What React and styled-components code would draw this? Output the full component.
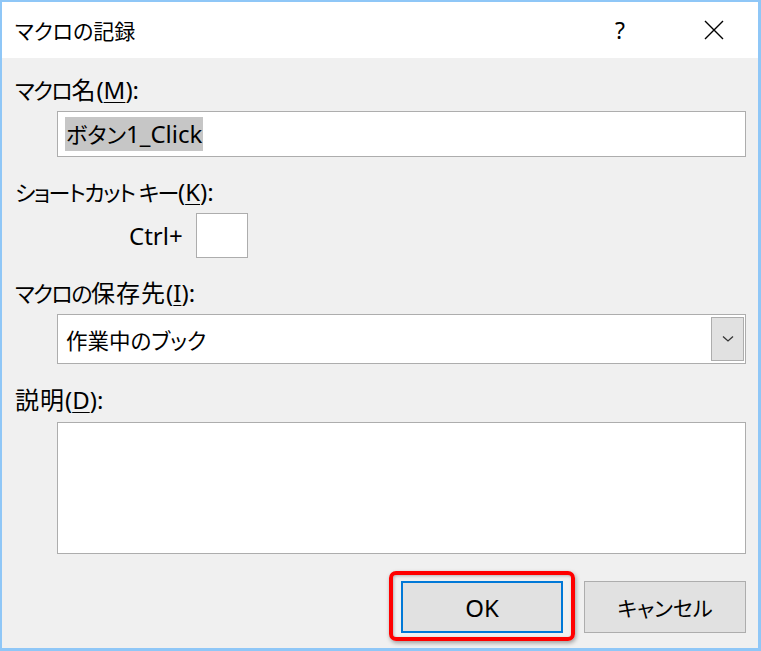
import React from "react";
import styled, { createGlobalStyle } from "styled-components";

const Global = createGlobalStyle`
  html, body { margin: 0; padding: 0; background: #f0f0f0; }
  body {
    font-family: "Noto Sans", "Noto Sans CJK JP", sans-serif;
    color: #000;
  }
`;

const Frame = styled.div`
  width: 761px;
  height: 651px;
  box-sizing: border-box;
  border: 2px solid #8fc7f7;
  border-bottom-width: 3px;
  border-right-width: 3px;
  background: #f0f0f0;
  display: flex;
  flex-direction: column;
`;

const TitleBar = styled.div`
  height: 56px;
  background: #fff;
  display: flex;
  align-items: center;
  padding-left: 13px;
  flex-shrink: 0;
`;

const Title = styled.div`
  flex: 1;
  font-size: 21px;
  font-family: "Noto Sans CJK JP", sans-serif;
  font-feature-settings: "palt";
`;

const Help = styled.div`
  font-size: 23px;
  width: 28px;
  text-align: center;
  margin-right: 70px;
`;

const Close = styled.div`
  width: 20px;
  height: 20px;
  margin-right: 34px;
  display: flex;
`;

const Body = styled.div`
  flex: 1;
  display: flex;
  flex-direction: column;
  padding: 0 12px 0 13px;
`;

const Label = styled.div`
  font-size: 22px;
  letter-spacing: -1.5px;
  font-feature-settings: "palt";
  line-height: 30px;
  height: 30px;
  margin-top: ${(p) => p.$top}px;
  white-space: nowrap;
  u { text-decoration-thickness: 1px; text-underline-offset: 3px; }
`;

const Latin = styled.span`
  font-size: 24px;
  letter-spacing: 0;
`;

const Kanji = styled.span`
  font-size: 24px;
  letter-spacing: 1px;
`;

const Field = styled.div`
  margin-left: 42px;
  margin-top: ${(p) => p.$top}px;
  height: ${(p) => p.$h}px;
  box-sizing: border-box;
  border: 1px solid #adadad;
  background: #fff;
  display: flex;
  align-items: center;
  font-size: 22px;
  font-feature-settings: "palt";
`;

const Selected = styled.span`
  margin-left: 7px;
  background: #c6c6c6;
  padding: 0 1px;
  line-height: 33px;
`;

const SelectText = styled.span`
  flex: 1;
  margin-left: 8px;
  font-family: "Noto Sans CJK JP", sans-serif;
  font-size: 21.5px;
`;

const DropButton = styled.div`
  width: 33px;
  height: 44px;
  margin-right: 1px;
  box-sizing: border-box;
  border: 1px solid #adadad;
  background: #e1e1e1;
  display: flex;
  align-items: center;
  justify-content: center;
`;

const CtrlRow = styled.div`
  display: flex;
  align-items: center;
  margin-top: 6px;
  padding-left: 114px;
  gap: 13px;
  font-size: 24px;
`;

const KeyBox = styled.div`
  width: 52px;
  height: 45px;
  box-sizing: border-box;
  border: 1px solid #adadad;
  background: #fff;
`;

const Buttons = styled.div`
  display: flex;
  justify-content: flex-end;
  gap: 21px;
  margin-top: 27px;
`;

const Button = styled.div`
  position: relative;
  width: 162px;
  height: 52px;
  box-sizing: border-box;
  background: #e1e1e1;
  border: ${(p) => (p.$focus ? "2px solid #0078d7" : "1px solid #adadad")};
  display: flex;
  align-items: center;
  justify-content: center;
  font-size: ${(p) => (p.$focus ? 24 : 21)}px;
  font-feature-settings: "palt";
`;

const Highlight = styled.div`
  position: absolute;
  left: -14px;
  right: -14px;
  top: -12px;
  bottom: -10px;
  border: 4px solid #ff0000;
  border-radius: 7px;
  box-shadow: 1px 2px 4px rgba(0, 0, 0, 0.35), inset 1px 1px 3px rgba(0, 0, 0, 0.25);
  pointer-events: none;
`;

export default function App() {
  return (
    <>
      <Global />
      <Frame>
        <TitleBar>
          <Title>マクロの記録</Title>
          <Help>?</Help>
          <Close>
            <svg width="20" height="20" viewBox="0 0 20 20">
              <path d="M1 1 L19 19 M19 1 L1 19" stroke="#000" strokeWidth="1.4" fill="none" />
            </svg>
          </Close>
        </TitleBar>
        <Body>
          <Label $top={17}>
            マクロ<Kanji>名</Kanji>
            <Latin>(<u>M</u>):</Latin>
          </Label>
          <Field $top={6} $h={46}>
            <Selected>
              ボタン<Latin>1_Click</Latin>
            </Selected>
          </Field>
          <Label $top={20}>
            ショートカット キー<Latin>(<u>K</u>):</Latin>
          </Label>
          <CtrlRow>
            <span>Ctrl+</span>
            <KeyBox />
          </CtrlRow>
          <Label $top={20}>
            マクロの<Kanji>保存先</Kanji>
            <Latin>(<u>I</u>):</Latin>
          </Label>
          <Field $top={6} $h={50}>
            <SelectText>作業中のブック</SelectText>
            <DropButton>
              <svg width="12" height="8" viewBox="0 0 12 8">
                <path d="M1 1.5 L6 6 L11 1.5" stroke="#333" strokeWidth="1.3" fill="none" />
              </svg>
            </DropButton>
          </Field>
          <Label $top={21}>
            <Kanji>説明</Kanji>
            <Latin>(<u>D</u>):</Latin>
          </Label>
          <Field $top={7} $h={132} />
          <Buttons>
            <Button $focus>
              OK
              <Highlight />
            </Button>
            <Button>キャンセル</Button>
          </Buttons>
        </Body>
      </Frame>
    </>
  );
}
